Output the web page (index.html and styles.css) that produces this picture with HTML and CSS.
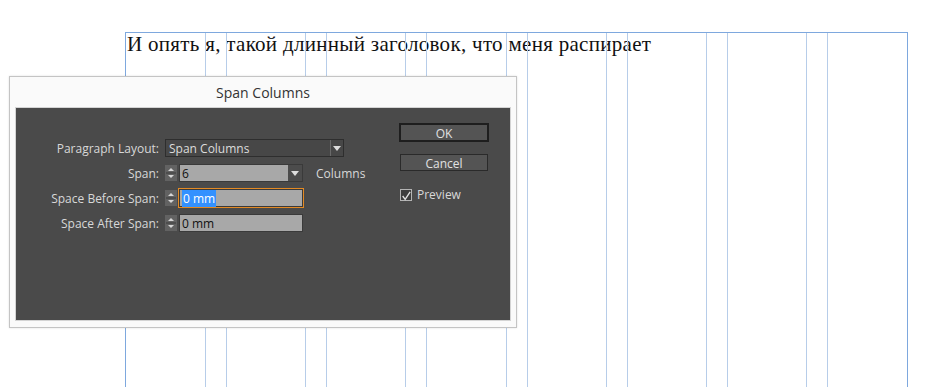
FILE: index.html
```html
<!DOCTYPE html>
<html lang="ru">

<head>
  <meta charset="UTF-8">
  <meta name="viewport" content="width=device-width, initial-scale=1.0">
  <title>Span Columns</title>

  <link rel="stylesheet" href="styles.css">
</head>

<body>
  <section class="spread">
    <h1 class="headline">И опять я, такой длинный заголовок, что меня распирает</h1>
    <div class="guides">
      <span></span><span></span><span></span><span></span>
      <span></span><span></span><span></span><span></span>
    </div>
  </section>

  <div class="dialog">
    <div class="dialog-title">Span Columns</div>
    <div class="dialog-body">
      <div class="form">
        <div class="row">
          <label class="label">Paragraph Layout:</label>
          <div class="select">
            <span class="select-text">Span Columns</span>
            <span class="select-arrow"><i class="tri"></i></span>
          </div>
        </div>
        <div class="row">
          <label class="label">Span:</label>
          <span class="spinner">
            <svg width="12" height="16" viewBox="0 0 12 16">
              <rect x="0" y="0" width="12" height="16" fill="#626262" />
              <line x1="1" y1="8" x2="11" y2="8" stroke="#3a3a3a" />
              <path d="M3 6 L6 3 L9 6 Z" fill="#d6d6d6" />
              <path d="M3 10 L6 13 L9 10 Z" fill="#d6d6d6" />
            </svg>
          </span>
          <div class="combo">
            <span class="combo-text">6</span>
            <span class="combo-arrow"><i class="tri"></i></span>
          </div>
          <span class="unit">Columns</span>
        </div>
        <div class="row">
          <label class="label">Space Before Span:</label>
          <span class="spinner">
            <svg width="12" height="16" viewBox="0 0 12 16">
              <rect x="0" y="0" width="12" height="16" fill="#626262" />
              <line x1="1" y1="8" x2="11" y2="8" stroke="#3a3a3a" />
              <path d="M3 6 L6 3 L9 6 Z" fill="#d6d6d6" />
              <path d="M3 10 L6 13 L9 10 Z" fill="#d6d6d6" />
            </svg>
          </span>
          <div class="field field-focus"><span class="selected">0 mm</span></div>
        </div>
        <div class="row">
          <label class="label">Space After Span:</label>
          <span class="spinner">
            <svg width="12" height="16" viewBox="0 0 12 16">
              <rect x="0" y="0" width="12" height="16" fill="#626262" />
              <line x1="1" y1="8" x2="11" y2="8" stroke="#3a3a3a" />
              <path d="M3 6 L6 3 L9 6 Z" fill="#d6d6d6" />
              <path d="M3 10 L6 13 L9 10 Z" fill="#d6d6d6" />
            </svg>
          </span>
          <div class="field">0 mm</div>
        </div>
      </div>

      <div class="actions">
        <button class="btn btn-default">OK</button>
        <button class="btn btn-cancel">Cancel</button>
        <label class="check">
          <span class="check-box">
            <svg width="12" height="12" viewBox="0 0 12 12">
              <path d="M2 6 L5 10 L11 1" fill="none" stroke="#e4e4e4" stroke-width="1.6" />
            </svg>
          </span>
          Preview
        </label>
      </div>
    </div>
  </div>
</body>

</html>
```

FILE: styles.css
```css
* {
  margin: 0;
  padding: 0;
  box-sizing: border-box;
}

body {
  background-color: #fff;
  height: 387px;
  overflow: hidden;
  position: relative;
  padding-top: 32px;
}

.spread {
  margin-left: 125px;
  width: 783px;
  height: 355px;
  border: 1px solid #7ea8de;
  border-bottom: none;
  position: relative;
}

.headline {
  font-family: "Liberation Serif", serif;
  font-weight: normal;
  font-size: 21px;
  letter-spacing: 0.3px;
  line-height: 20px;
  color: #111;
  padding-left: 1px;
  padding-top: 1px;
}

.guides {
  position: absolute;
  top: 0;
  left: 0;
  right: 0;
  bottom: 0;
  display: grid;
  grid-template-columns: repeat(8, 1fr);
  column-gap: 20px;
  pointer-events: none;
}

.guides span {
  border-left: 1px solid #b7cde9;
  border-right: 1px solid #b7cde9;
}

.guides span:first-child {
  border-left: none;
}

.guides span:last-child {
  border-right: none;
}

/* dialog */
.dialog {
  position: absolute;
  left: 9px;
  top: 76px;
  width: 508px;
  height: 252px;
  border: 1px solid #c4c4c4;
  background-color: #fafafa;
  box-shadow: 0 0 2px rgba(0, 0, 0, 0.12);
  padding: 0 6px 7px;
  display: flex;
  flex-direction: column;
  font-family: "Open Sans", sans-serif;
}

.dialog-title {
  height: 31px;
  line-height: 31px;
  text-align: center;
  font-size: 14px;
  color: #333;
}

.dialog-body {
  flex: 1;
  background-color: #4a4a4a;
  box-shadow: 0 0 0 1px #d4d4d4;
  display: flex;
  font-size: 12px;
  color: #d8d8d8;
}

.form {
  width: 383px;
  padding-top: 31px;
}

.row {
  display: flex;
  align-items: center;
  height: 18px;
  margin-bottom: 7px;
}

.label {
  width: 144px;
  text-align: right;
  padding-right: 1px;
  margin-right: 5px;
}

.select {
  width: 179px;
  height: 18px;
  border: 1px solid #2e2e2e;
  background-color: #474747;
  display: flex;
  align-items: center;
}

.select-text {
  flex: 1;
  padding-left: 3px;
  color: #dcdcdc;
}

.select-arrow,
.combo-arrow {
  width: 13px;
  height: 100%;
  display: flex;
  align-items: center;
  justify-content: center;
}

.select-arrow {
  border-left: 1px solid #6a6a6a;
}

.combo-arrow {
  width: 14px;
  background-color: #4c4c4c;
}

.tri {
  width: 0;
  height: 0;
  border-left: 4px solid transparent;
  border-right: 4px solid transparent;
  border-top: 5px solid #dedede;
}

.spinner {
  width: 12px;
  height: 16px;
  margin-right: 2px;
  display: flex;
}

.combo {
  width: 124px;
  height: 18px;
  border: 1px solid #3a3a3a;
  background-color: #a8a8a8;
  display: flex;
  align-items: center;
}

.combo-text {
  flex: 1;
  padding-left: 2px;
  color: #111;
}

.unit {
  margin-left: 13px;
}

.field {
  width: 124px;
  height: 18px;
  border: 1px solid #3a3a3a;
  background-color: #a8a8a8;
  color: #111;
  padding-left: 2px;
  display: flex;
  align-items: center;
}

.field-focus {
  outline: 1px solid #e38a24;
}

.selected {
  background-color: #3391ff;
  color: #fff;
  padding: 0 1px;
}

.actions {
  padding-top: 15px;
  display: flex;
  flex-direction: column;
  align-items: flex-start;
}

.btn {
  font-family: "Open Sans", sans-serif;
  font-size: 12px;
  color: #e2e2e2;
  background-color: #545454;
  cursor: pointer;
}

.btn-default {
  width: 90px;
  height: 19px;
  border: 2px solid #1e1e1e;
  margin-bottom: 12px;
}

.btn-cancel {
  width: 88px;
  height: 17px;
  border: 1px solid #2a2a2a;
  margin-left: 1px;
  margin-bottom: 15px;
}

.check {
  display: flex;
  align-items: center;
  margin-left: 1px;
}

.check-box {
  width: 12px;
  height: 12px;
  border: 1px solid #b4b4b4;
  background-color: #3e3e3e;
  margin-right: 5px;
  display: flex;
}
```
